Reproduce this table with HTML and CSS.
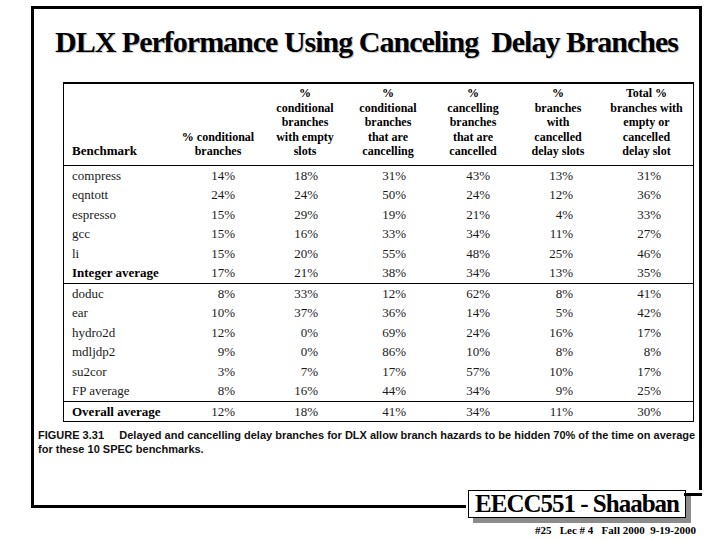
FILE: index.html
```html
<!DOCTYPE html>
<html>
<head>
<meta charset="utf-8">
<link rel="stylesheet" href="styles.css">
</head>
<body>
<div class="page">
  <div class="frame">
    <h1 class="title">DLX Performance Using Canceling&nbsp; Delay Branches</h1>
    <table class="perf">
      <thead>
        <tr>
          <th class="bench">Benchmark</th>
          <th>% conditional<br>branches</th>
          <th>%<br>conditional<br>branches<br>with empty<br>slots</th>
          <th>%<br>conditional<br>branches<br>that are<br>cancelling</th>
          <th>%<br>cancelling<br>branches<br>that are<br>cancelled</th>
          <th>%<br>branches<br>with<br>cancelled<br>delay slots</th>
          <th>Total %<br>branches with<br>empty or<br>cancelled<br>delay slot</th>
        </tr>
      </thead>
      <tbody>
        <tr><td class="name">compress</td><td class="c2">14%</td><td class="c3">18%</td><td class="c4">31%</td><td class="c5">43%</td><td class="c6">13%</td><td class="c7">31%</td></tr>
        <tr><td class="name">eqntott</td><td class="c2">24%</td><td class="c3">24%</td><td class="c4">50%</td><td class="c5">24%</td><td class="c6">12%</td><td class="c7">36%</td></tr>
        <tr><td class="name">espresso</td><td class="c2">15%</td><td class="c3">29%</td><td class="c4">19%</td><td class="c5">21%</td><td class="c6">4%</td><td class="c7">33%</td></tr>
        <tr><td class="name">gcc</td><td class="c2">15%</td><td class="c3">16%</td><td class="c4">33%</td><td class="c5">34%</td><td class="c6">11%</td><td class="c7">27%</td></tr>
        <tr><td class="name">li</td><td class="c2">15%</td><td class="c3">20%</td><td class="c4">55%</td><td class="c5">48%</td><td class="c6">25%</td><td class="c7">46%</td></tr>
        <tr><td class="name strong">Integer average</td><td class="c2">17%</td><td class="c3">21%</td><td class="c4">38%</td><td class="c5">34%</td><td class="c6">13%</td><td class="c7">35%</td></tr>
        <tr class="group"><td class="name">doduc</td><td class="c2">8%</td><td class="c3">33%</td><td class="c4">12%</td><td class="c5">62%</td><td class="c6">8%</td><td class="c7">41%</td></tr>
        <tr><td class="name">ear</td><td class="c2">10%</td><td class="c3">37%</td><td class="c4">36%</td><td class="c5">14%</td><td class="c6">5%</td><td class="c7">42%</td></tr>
        <tr><td class="name">hydro2d</td><td class="c2">12%</td><td class="c3">0%</td><td class="c4">69%</td><td class="c5">24%</td><td class="c6">16%</td><td class="c7">17%</td></tr>
        <tr><td class="name">mdljdp2</td><td class="c2">9%</td><td class="c3">0%</td><td class="c4">86%</td><td class="c5">10%</td><td class="c6">8%</td><td class="c7">8%</td></tr>
        <tr><td class="name">su2cor</td><td class="c2">3%</td><td class="c3">7%</td><td class="c4">17%</td><td class="c5">57%</td><td class="c6">10%</td><td class="c7">17%</td></tr>
        <tr><td class="name">FP average</td><td class="c2">8%</td><td class="c3">16%</td><td class="c4">44%</td><td class="c5">34%</td><td class="c6">9%</td><td class="c7">25%</td></tr>
        <tr class="group"><td class="name strong">Overall average</td><td class="c2">12%</td><td class="c3">18%</td><td class="c4">41%</td><td class="c5">34%</td><td class="c6">11%</td><td class="c7">30%</td></tr>
      </tbody>
    </table>
    <p class="caption">FIGURE 3.31&nbsp;&nbsp;&nbsp;&nbsp; Delayed and cancelling delay branches for DLX allow branch hazards to be hidden 70% of the time on average for these 10 SPEC benchmarks.</p>
  </div>
  <div class="footer">
    <div class="badge">EECC551 - Shaaban</div>
  </div>
  <div class="slideinfo">#25&nbsp;&nbsp; Lec # 4&nbsp;&nbsp; Fall 2000&nbsp; 9-19-2000</div>
</div>
</body>
</html>
```

FILE: styles.css
```css
html, body {
  margin: 0;
  padding: 0;
  background: #ffffff;
}

.page {
  position: relative;
  width: 720px;
  height: 540px;
  overflow: hidden;
  font-family: "Liberation Serif", "Times New Roman", serif;
  color: #000;
}

.frame {
  box-sizing: border-box;
  margin: 6px 0 0 31px;
  width: 671px;
  height: 502px;
  border: 3px solid #000;
  padding: 0;
}

.title {
  margin: 16px 0 0 0;
  text-align: center;
  font-family: "Liberation Serif", "Times New Roman", serif;
  font-weight: bold;
  font-size: 30px;
  line-height: 34px;
  letter-spacing: -1px;
  text-shadow: 1px 1px 0 #c8c8c8;
}

.perf {
  margin: 23px 0 0 29px;
  width: 631px;
  border-collapse: collapse;
  border: 1px solid #000;
  border-top: 2px solid #000;
  font-size: 13px;
  table-layout: fixed;
}

.perf th {
  font-weight: bold;
  font-size: 12px;
  line-height: 14.5px;
  vertical-align: bottom;
  text-align: center;
  padding: 2px 0 6px 0;
  height: 72px;
  border-bottom: 1px solid #000;
}

.perf th.bench {
  text-align: left;
  padding-left: 8px;
  width: 100px;
  font-size: 13px;
}

.perf th:nth-child(2) { width: 92px; }
.perf th:nth-child(3) { width: 82px; }
.perf th:nth-child(4) { width: 84px; }
.perf th:nth-child(5) { width: 86px; }
.perf th:nth-child(6) { width: 84px; }

.perf td {
  height: 19.5px;
  padding: 0;
  line-height: 19.5px;
  text-align: right;
  color: #1a1a1a;
}

.perf td.name {
  text-align: left;
  padding-left: 8px;
}

.perf td.strong {
  font-weight: bold;
  color: #000;
}

.perf tr.group td {
  border-top: 1px solid #000;
}

.perf td.c2 { padding-right: 29px; }
.perf td.c3 { padding-right: 28px; }
.perf td.c4 { padding-right: 24px; }
.perf td.c5 { padding-right: 26px; }
.perf td.c6 { padding-right: 27px; }
.perf td.c7 { padding-right: 32px; }

.caption {
  margin: 6px 0 0 4px;
  width: 660px;
  font-family: "Liberation Sans", Arial, sans-serif;
  font-weight: bold;
  font-size: 11px;
  line-height: 14px;
  color: #111;
}

.footer {
  position: absolute;
  left: 466px;
  top: 490px;
  width: 250px;
  height: 36px;
  background: #fff;
}

.footer::before {
  content: "";
  position: absolute;
  left: 218px;
  top: 3px;
  width: 18px;
  height: 3px;
  background: #000;
}

.badge {
  box-sizing: border-box;
  margin: 0 0 0 2px;
  width: 218px;
  height: 28px;
  border: 1.5px solid #000;
  background: #fff;
  box-shadow: 5px 5px 0 #8c8c8c;
  text-align: center;
  font-family: "Liberation Serif", "Times New Roman", serif;
  font-weight: bold;
  font-size: 25px;
  line-height: 26px;
  letter-spacing: -1px;
}

.slideinfo {
  position: absolute;
  left: 535px;
  top: 524px;
  font-family: "Liberation Serif", "Times New Roman", serif;
  font-weight: bold;
  font-size: 11px;
  line-height: 12px;
  letter-spacing: 0;
  white-space: nowrap;
}
```
